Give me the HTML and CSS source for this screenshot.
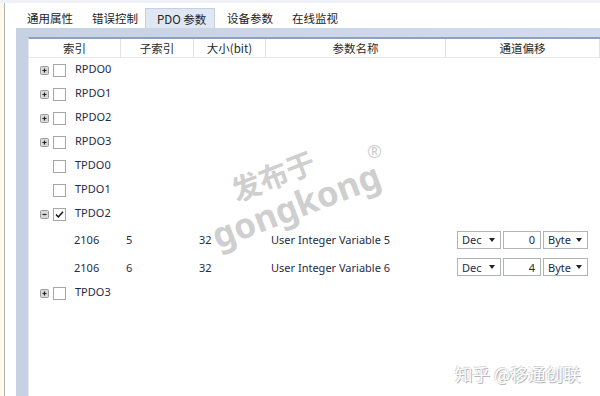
FILE: index.html
```html
<!DOCTYPE html>
<html lang="zh-CN">
<head>
    <meta charset="UTF-8">
    <title>PDO 参数</title>
    <link rel="stylesheet" href="styles.css">
</head>
<body>

<div class="window">
    <div class="side"></div>
    <div class="main">
        <nav class="tabs">
            <span class="tab">通用属性</span>
            <span class="tab">错误控制</span>
            <span class="tab active">PDO 参数</span>
            <span class="tab">设备参数</span>
            <span class="tab">在线监视</span>
        </nav>

        <div class="panel">
            <div class="sheet">
                <div class="grid head">
                    <div class="hcell">索引</div>
                    <div class="hcell">子索引</div>
                    <div class="hcell">大小(bit)</div>
                    <div class="hcell">参数名称</div>
                    <div class="hcell">通道偏移</div>
                </div>

                <div class="grid row">
                    <div class="tree"><svg class="exp" viewBox="0 0 9 9"><rect x="0.5" y="0.5" width="8" height="8" rx="1" fill="#d8d8d8" stroke="#9c9c9c"/><path d="M2.5 4.5h4M4.5 2.5v4" stroke="#222" stroke-width="1.2"/></svg><span class="chk"></span><span class="label">RPDO0</span></div>
                </div>
                <div class="grid row">
                    <div class="tree"><svg class="exp" viewBox="0 0 9 9"><rect x="0.5" y="0.5" width="8" height="8" rx="1" fill="#d8d8d8" stroke="#9c9c9c"/><path d="M2.5 4.5h4M4.5 2.5v4" stroke="#222" stroke-width="1.2"/></svg><span class="chk"></span><span class="label">RPDO1</span></div>
                </div>
                <div class="grid row">
                    <div class="tree"><svg class="exp" viewBox="0 0 9 9"><rect x="0.5" y="0.5" width="8" height="8" rx="1" fill="#d8d8d8" stroke="#9c9c9c"/><path d="M2.5 4.5h4M4.5 2.5v4" stroke="#222" stroke-width="1.2"/></svg><span class="chk"></span><span class="label">RPDO2</span></div>
                </div>
                <div class="grid row">
                    <div class="tree"><svg class="exp" viewBox="0 0 9 9"><rect x="0.5" y="0.5" width="8" height="8" rx="1" fill="#d8d8d8" stroke="#9c9c9c"/><path d="M2.5 4.5h4M4.5 2.5v4" stroke="#222" stroke-width="1.2"/></svg><span class="chk"></span><span class="label">RPDO3</span></div>
                </div>
                <div class="grid row">
                    <div class="tree"><span class="exp none"></span><span class="chk"></span><span class="label">TPDO0</span></div>
                </div>
                <div class="grid row">
                    <div class="tree"><span class="exp none"></span><span class="chk"></span><span class="label">TPDO1</span></div>
                </div>
                <div class="grid row">
                    <div class="tree"><svg class="exp" viewBox="0 0 9 9"><rect x="0.5" y="0.5" width="8" height="8" rx="1" fill="#d8d8d8" stroke="#9c9c9c"/><path d="M2.5 4.5h4" stroke="#222" stroke-width="1.2"/></svg><span class="chk"><svg viewBox="0 0 11 11"><path d="M2 5.5l2.3 2.5L9 2.8" fill="none" stroke="#111" stroke-width="1.5"/></svg></span><span class="label">TPDO2</span></div>
                </div>

                <div class="grid row data">
                    <div class="cell idx">2106</div>
                    <div class="cell">5</div>
                    <div class="cell">32</div>
                    <div class="cell">User Integer Variable 5</div>
                    <div class="cell ctrls">
                        <span class="select sel-dec">Dec<i class="arrow"></i></span>
                        <span class="num">0</span>
                        <span class="select sel-unit">Byte<i class="arrow"></i></span>
                    </div>
                </div>
                <div class="grid row data">
                    <div class="cell idx">2106</div>
                    <div class="cell">6</div>
                    <div class="cell">32</div>
                    <div class="cell">User Integer Variable 6</div>
                    <div class="cell ctrls">
                        <span class="select sel-dec">Dec<i class="arrow"></i></span>
                        <span class="num">4</span>
                        <span class="select sel-unit">Byte<i class="arrow"></i></span>
                    </div>
                </div>

                <div class="grid row">
                    <div class="tree"><svg class="exp" viewBox="0 0 9 9"><rect x="0.5" y="0.5" width="8" height="8" rx="1" fill="#d8d8d8" stroke="#9c9c9c"/><path d="M2.5 4.5h4M4.5 2.5v4" stroke="#222" stroke-width="1.2"/></svg><span class="chk"></span><span class="label">TPDO3</span></div>
                </div>
            </div>
        </div>
    </div>

    <!-- watermarks over the screenshot -->
    <div class="wm-cn">发布于</div>
    <div class="wm-en">gongkong</div>
    <div class="wm-reg">®</div>
    <div class="wm-zhihu">知乎 @移通创联</div>
</div>

</body>
</html>
```

FILE: styles.css
```css
html, body {
    margin: 0;
    padding: 0;
}

body {
    width: 600px;
    height: 396px;
    overflow: hidden;
    background: #fff;
    font: 11px "Noto Sans", "Noto Sans CJK SC", sans-serif;
    color: #1f2b48;
}

.window {
    position: relative;
    display: flex;
    height: 396px;
    border-top: 3px solid #eef1f5;
    box-sizing: border-box;
}

.side {
    width: 4px;
    flex: none;
    background: #fdf9ec;
    border-right: 1px solid #b4b4b4;
}

.main {
    flex: 1;
    display: flex;
    flex-direction: column;
    padding-left: 11px;
}

/* tabs */
.tabs {
    display: flex;
    height: 25px;
    padding: 5px 0 0 3px;
    box-sizing: border-box;
    align-items: stretch;
    font-family: "Noto Sans CJK SC", sans-serif;
    font-size: 11.5px;
    color: #222;
}

.tab {
    display: flex;
    align-items: center;
    width: 65px;
    padding-left: 8px;
    box-sizing: border-box;
}

.tab.active {
    width: 70px;
    padding-left: 11px;
    margin: 0 4px 0 -4px;
    background: #dfe7f2;
    border: 1px solid #c5d0e0;
    border-bottom: none;
}

/* panel */
.panel {
    flex: 1;
    background: linear-gradient(to right, #c6d1e4, #d3dcec);
    padding: 9px 0 0 12px;
}

.sheet {
    height: 100%;
    background: #fff;
    border-top: 2px solid #8ea2bf;
    border-left: 1px solid #e4e8ef;
}

.grid {
    display: grid;
    grid-template-columns: 92px 73px 72px 180px 1fr;
}

.head {
    height: 18px;
    border-bottom: 1px solid #e8e8e8;
    font-family: "Noto Sans CJK SC", sans-serif;
    font-size: 11.5px;
    color: #2a2a2a;
}

.hcell {
    display: flex;
    align-items: center;
    justify-content: center;
    border-right: 1px solid #e2e2e2;
}

.row {
    height: 24px;
    align-items: center;
}

.row.data {
    height: 27.5px;
}

.tree {
    grid-column: 1 / -1;
    display: flex;
    align-items: center;
    padding-left: 11px;
}

.exp {
    width: 9px;
    height: 9px;
    flex: none;
}

.exp.none {
    display: inline-block;
}

.chk {
    width: 11px;
    height: 11px;
    margin-left: 4px;
    border: 1px solid #a6a6a6;
    background: #fff;
    display: flex;
}

.chk svg {
    width: 11px;
    height: 11px;
}

.label {
    margin-left: 9px;
    margin-top: -4px;
}

.cell {
    padding-left: 5px;
}

.cell.idx {
    padding-left: 45px;
}

.ctrls {
    display: flex;
    gap: 2px;
    padding-left: 11px;
}

.select, .num {
    height: 18px;
    box-sizing: border-box;
    border: 1px solid #b0b3b8;
    display: flex;
    align-items: center;
    padding: 0 5px 0 4px;
    background: #fff;
}

.sel-dec {
    width: 44px;
}

.sel-unit {
    width: 45px;
}

.num {
    width: 38px;
    justify-content: flex-end;
}

.arrow {
    margin-left: auto;
    width: 0;
    height: 0;
    border-left: 3px solid transparent;
    border-right: 3px solid transparent;
    border-top: 4px solid #222;
}

/* watermarks */
.wm-cn, .wm-en, .wm-reg {
    position: absolute;
    color: #cfcfcf;
    font-weight: bold;
    transform: rotate(-21deg);
    transform-origin: left center;
    white-space: nowrap;
}

.wm-cn {
    left: 232px;
    top: 166px;
    font-family: "Noto Sans CJK SC", sans-serif;
    font-size: 29px;
}

.wm-en {
    left: 213px;
    top: 210px;
    font-family: "Noto Sans", sans-serif;
    font-size: 35px;
}

.wm-reg {
    left: 367px;
    top: 136px;
    font-weight: normal;
    font-size: 18px;
    transform: none;
}

.wm-zhihu {
    position: absolute;
    left: 455px;
    top: 358px;
    font-family: "Noto Sans CJK SC", sans-serif;
    font-size: 17.5px;
    color: #fbfbfb;
    text-shadow: 1px 1px 0 #b8b8b8, -1px -1px 0 #dadada;
}
```
